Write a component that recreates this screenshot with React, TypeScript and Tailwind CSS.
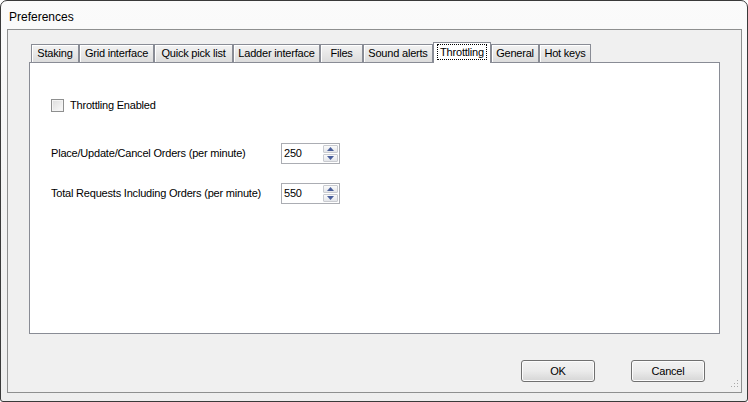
import React from 'react';

const tabs = [
  { label: 'Staking', w: 'w-[48px]' },
  { label: 'Grid interface', w: 'w-[75px]' },
  { label: 'Quick pick list', w: 'w-[79px]' },
  { label: 'Ladder interface', w: 'w-[87px]' },
  { label: 'Files', w: 'w-[43px]' },
  { label: 'Sound alerts', w: 'w-[70px]' },
  { label: 'Throttling', w: 'w-[58px]', active: true },
  { label: 'General', w: 'w-[48px]' },
  { label: 'Hot keys', w: 'w-[52px]' },
];

const Spinner: React.FC<{ value: string }> = ({ value }) => (
  <div className="flex h-[21px] w-[59px] items-stretch border border-[#abadb3] bg-white">
    <div className="flex flex-1 items-center pl-[2px] text-[11px] text-black">{value}</div>
    <div className="my-[1px] mr-[1px] flex w-[15px] flex-col gap-px">
      <div className="flex flex-1 items-center justify-center rounded-[1px] border border-[#c9cbd0] bg-gradient-to-b from-[#fbfbfb] to-[#e4e6ea]">
        <svg width="7" height="4" viewBox="0 0 7 4">
          <path d="M0 4 L3.5 0 L7 4 Z" fill="#4a5f9c" />
        </svg>
      </div>
      <div className="flex flex-1 items-center justify-center rounded-[1px] border border-[#c9cbd0] bg-gradient-to-b from-[#fbfbfb] to-[#e4e6ea]">
        <svg width="7" height="4" viewBox="0 0 7 4">
          <path d="M0 0 L7 0 L3.5 4 Z" fill="#4a5f9c" />
        </svg>
      </div>
    </div>
  </div>
);

const Button: React.FC<{ label: string }> = ({ label }) => (
  <button className="flex h-[22px] w-[74px] items-center justify-center rounded-[3px] border border-[#707070] bg-gradient-to-b from-[#f2f2f2] via-[#ebebeb] to-[#d6d6d6] text-[11px] text-black shadow-[inset_0_0_0_1px_#fcfcfc]">
    {label}
  </button>
);

export default function App() {
  return (
    <div
      className="flex h-[402px] w-[748px] flex-col rounded-t-[7px] rounded-b-[3px] border border-[#3a3a3a] bg-gradient-to-b from-[#fbfbfb] via-[#f3f3f3] to-[#eeeeee] text-black"
      style={{ fontFamily: '"Liberation Sans", Arial, sans-serif' }}
    >
      <div className="flex h-[28px] items-center pl-[8px] pt-[3px] text-[12px]">Preferences</div>

      <div className="relative mb-[8px] ml-[6px] mr-[5px] flex flex-1 flex-col border border-[#8e8f8f] bg-[#f0f0f0] pl-[21px] pt-[12px] tracking-[-0.2px]">
        <div className="flex h-[20px] items-end pl-[2px]">
          {tabs.map((t) =>
            t.active ? (
              <div
                key={t.label}
                className={`relative z-10 -mb-px flex h-[21px] ${t.w} items-start justify-center border border-b-0 border-[#898c95] bg-white pt-[1px] text-[11px]`}
              >
                <span className="border border-dotted border-black px-[2px] leading-[14px]">{t.label}</span>
              </div>
            ) : (
              <div
                key={t.label}
                className={`flex h-[18px] ${t.w} items-center justify-center border border-b-0 border-[#898c95] bg-gradient-to-b from-[#f3f3f3] to-[#dcdcdc] text-[11px] shadow-[inset_1px_1px_0_#ffffff]`}
              >
                {t.label}
              </div>
            )
          )}
        </div>

        <div className="flex h-[272px] w-[691px] flex-col border border-[#898c95] bg-white pl-[21px] pt-[36px] text-[11px]">
          <label className="flex h-[13px] items-center gap-[6px]">
            <span className="h-[13px] w-[13px] border border-[#8e8f8f] bg-gradient-to-br from-[#dcdcdc] to-[#fbfbfb] shadow-[inset_0_0_0_1px_#f4f4f4]" />
            <span>Throttling Enabled</span>
          </label>

          <div className="mt-[31px] flex flex-col gap-[19px]">
            <div className="flex items-center">
              <span className="w-[230px]">Place/Update/Cancel Orders (per minute)</span>
              <Spinner value="250" />
            </div>
            <div className="flex items-center">
              <span className="w-[230px]">Total Requests Including Orders (per minute)</span>
              <Spinner value="550" />
            </div>
          </div>
        </div>

        <div className="mt-[26px] flex justify-end gap-[36px] pr-[36px]">
          <Button label="OK" />
          <Button label="Cancel" />
        </div>

        <svg className="absolute bottom-[2px] right-[2px]" width="10" height="10" viewBox="0 0 10 10">
          <g fill="#a8a8a8">
            <rect x="8" y="0" width="1" height="1" />
            <rect x="5" y="3" width="1" height="1" />
            <rect x="8" y="3" width="1" height="1" />
            <rect x="2" y="6" width="1" height="1" />
            <rect x="5" y="6" width="1" height="1" />
            <rect x="8" y="6" width="1" height="1" />
          </g>
        </svg>
      </div>
    </div>
  );
}
